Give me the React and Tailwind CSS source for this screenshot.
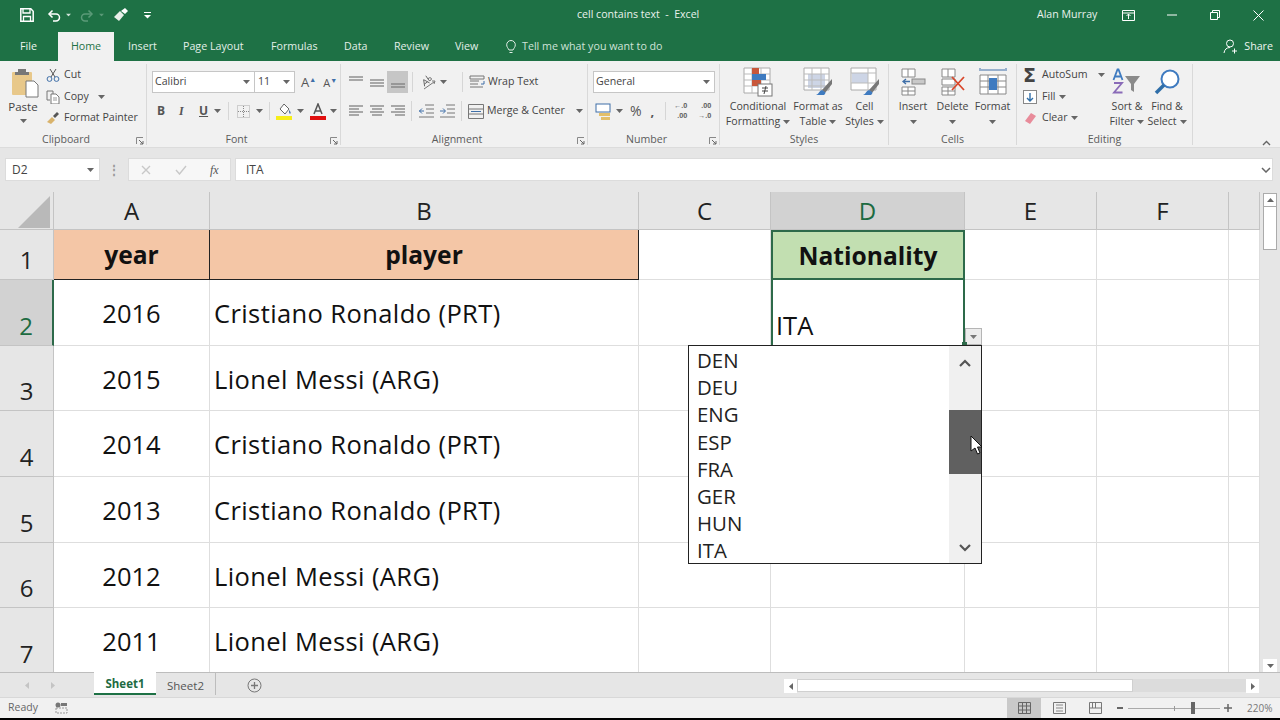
import React from "react";

const Caret = ({ c = "#666", className = "" }) => (
  <svg width="7" height="4" viewBox="0 0 7 4" className={`shrink-0 ${className}`}><path d="M0 0h7L3.5 4z" fill={c} /></svg>
);

const Launcher = () => (
  <svg width="8" height="8" viewBox="0 0 8 8" className="absolute right-[2px] top-[5px]"><path d="M.5 7V.5H7" fill="none" stroke="#888" /><path d="M3 3l4 4M7 4v3H4" fill="none" stroke="#666" /></svg>
);

const Group = ({ w, label, launcher, children }) => (
  <div className={`flex flex-col border-r border-[#d9d9d9] h-full shrink-0 ${w}`}>
    <div className="flex-1 min-h-0 relative">{children}</div>
    <div className={`relative h-[16px] mb-[-3px] flex items-center justify-center text-[10.6px] text-[#5c5c5c] ${launcher ? "pr-[14px]" : ""}`}>
      {label}
      {launcher && <Launcher />}
    </div>
  </div>
);

const Big = ({ w, icon, l1, l2, caret }) => (
  <div className={`flex flex-col items-center shrink-0 ${w}`}>
    <div className="h-[32px] flex items-center justify-center">{icon}</div>
    <div className="text-[10.6px] leading-[15px] text-[#444] mt-[1px] whitespace-nowrap">{l1}</div>
    <div className="text-[10.6px] leading-[15px] text-[#444] whitespace-nowrap flex items-center gap-[3px] h-[15px]">
      {l2}
      {caret && <Caret />}
    </div>
  </div>
);

const Lines = ({ ys, xs }) => (
  <svg width="14" height="14" viewBox="0 0 14 14" className="shrink-0">
    {ys.map((y, i) => <path key={i} d={`M${xs ? xs[i][0] : 0} ${y}H${xs ? xs[i][1] : 14}`} stroke="#777" strokeWidth="1.2" />)}
  </svg>
);

const GridIcon = ({ children }) => <svg width="30" height="30" viewBox="0 0 30 30">{children}</svg>;

function Ribbon() {
  return (
    <div className="h-[87px] bg-[#f1f1f1] pt-[3px] flex border-b border-[#dcdcdc] shrink-0">
      <div className="h-[81px] flex">
        <Group w="w-[147px]" label="Clipboard" launcher>
          <div className="flex">
            <div className="w-[46px] flex flex-col items-center">
              <svg width="28" height="30" viewBox="0 0 28 30" className="mt-[4px] ml-[4px]">
                <rect x="1" y="4" width="20" height="23" rx="1" fill="#e8c88a" />
                <rect x="7" y="1" width="8" height="5" fill="#777" />
                <rect x="4" y="4" width="14" height="3" fill="#777" />
                <path d="M15 13h8l4 4v12H15z" fill="#fff" stroke="#777" />
              </svg>
              <div className="text-[11.5px] leading-[15px] text-[#444] mt-[1px]">Paste</div>
              <Caret className="mt-[5px]" />
            </div>
            <div className="flex flex-col text-[10.6px] text-[#444]">
              <div className="h-[22px] flex items-center gap-[4px]">
                <svg width="14" height="14" viewBox="0 0 14 14"><path d="M4 1l5 8M10 1L5 9" stroke="#555" fill="none" /><circle cx="3.5" cy="11" r="2.4" fill="none" stroke="#3f6fa8" /><circle cx="10.5" cy="11" r="2.4" fill="none" stroke="#3f6fa8" /></svg>
                Cut
              </div>
              <div className="h-[21px] flex items-center gap-[4px]">
                <svg width="14" height="14" viewBox="0 0 14 14"><path d="M1 1h6v3M1 1v9h3" fill="none" stroke="#777" /><path d="M5 4h5l3 3v7H5z" fill="#fff" stroke="#777" /><path d="M7 8h4M7 10h4" stroke="#999" /></svg>
                Copy <Caret className="ml-[5px]" />
              </div>
              <div className="h-[22px] flex items-center gap-[4px]">
                <svg width="14" height="14" viewBox="0 0 14 14"><path d="M1 11l5-5 3 3-4 4z" fill="#d9b36c" /><path d="M7 5l4-4 2 2-4 4z" fill="#555" /></svg>
                Format Painter
              </div>
            </div>
          </div>
        </Group>

        <Group w="w-[194px]" label="Font" launcher>
          <div className="flex flex-col pl-[5px] pt-[7px]">
            <div className="flex items-center">
              <div className="w-[103px] h-[22px] bg-white border border-[#c6c6c6] flex items-center justify-between px-[2px] pr-[4px] text-[10.6px] text-[#444]">Calibri<Caret /></div>
              <div className="w-[40px] h-[22px] bg-white border border-l-0 border-[#c6c6c6] flex items-center justify-between px-[3px] pr-[4px] text-[10.6px] text-[#444]">11<Caret /></div>
              <div className="ml-[6px] text-[13px] text-[#555] leading-none">A<span className="text-[7px] align-top text-[#3f6fa8]">▲</span></div>
              <div className="ml-[7px] text-[11px] text-[#555] leading-none">A<span className="text-[7px] align-top text-[#3f6fa8]">▼</span></div>
            </div>
            <div className="flex items-center h-[22px] mt-[7px] pl-[5px] text-[#555]">
              <span className="w-[21px] text-[12px] font-bold">B</span>
              <span className="w-[21px] pl-[1px] text-[12px] italic font-bold [font-family:'Liberation_Serif',serif]">I</span>
              <span className="w-[15px] text-[12px] font-bold underline">U</span>
              <Caret />
              <div className="w-px h-[18px] bg-[#d6d6d6] ml-[7px] mr-[8px]" />
              <svg width="13" height="13" viewBox="0 0 13 13"><path d="M.5.5h12v12H.5z" fill="none" stroke="#aaa" strokeDasharray="1 1" /><path d="M6.5 1v11M1 6.5h11" stroke="#888" strokeDasharray="1 1" /></svg>
              <Caret className="ml-[6px]" />
              <div className="w-px h-[18px] bg-[#d6d6d6] ml-[6px] mr-[6px]" />
              <svg width="17" height="17" viewBox="0 0 17 17"><path d="M8 1l5 5-4 5-5-5z" fill="#fff" stroke="#666" /><path d="M13 7c2 2 2 3 1 4-1-1-1-2-1-4z" fill="#3f6fa8" /><rect x="0" y="13" width="16" height="4" fill="#f6ee1a" /></svg>
              <Caret className="ml-[4px]" />
              <svg width="16" height="17" viewBox="0 0 16 17" className="ml-[6px]"><path d="M4 11L8 1l4 10M5.5 8h5" fill="none" stroke="#555" strokeWidth="1.5" /><rect x="0" y="13" width="16" height="4" fill="#e00f0f" /></svg>
              <Caret className="ml-[4px]" />
            </div>
          </div>
        </Group>

        <Group w="w-[247px]" label="Alignment" launcher>
          <div className="flex flex-col pl-[8px] pt-[7px]">
            <div className="flex items-center h-[22px]">
              <div className="w-[21px]"><Lines ys={[2, 5]} /></div>
              <div className="w-[17px]"><Lines ys={[5, 8, 11]} /></div>
              <div className="w-[21px] h-[22px] bg-[#c6c6c6] flex items-center justify-center"><Lines ys={[9, 12]} /></div>
              <div className="w-px h-[20px] bg-[#d6d6d6] ml-[4px] mr-[7px]" />
              <svg width="17" height="15" viewBox="0 0 17 15"><path d="M2 9l3-6 3 6M3 7h4M9 1v6M9 5c1-1 3 0 3 1.2S10 8 9 7" fill="none" stroke="#666" strokeWidth=".9" transform="rotate(-35 7 6)" /><path d="M4 14l10-7M12 6h3l-1 3" fill="none" stroke="#777" /></svg>
              <Caret className="ml-[3px]" />
              <div className="w-px h-[20px] bg-[#d6d6d6] ml-[15px] mr-[6px]" />
              <svg width="16" height="15" viewBox="0 0 16 15"><path d="M1 1h14v3H1zM1 6h9M1 9h8M1 12h13" fill="none" stroke="#777" /><path d="M15 6v3h-3" fill="none" stroke="#3f6fa8" /></svg>
              <span className="ml-[3px] text-[10.6px] text-[#444]">Wrap Text</span>
            </div>
            <div className="flex items-center h-[22px] mt-[7px]">
              <div className="w-[21px]"><Lines ys={[2, 5, 8, 11]} xs={[[0, 14], [0, 10], [0, 14], [0, 10]]} /></div>
              <div className="w-[21px]"><Lines ys={[2, 5, 8, 11]} xs={[[0, 14], [2, 12], [0, 14], [2, 12]]} /></div>
              <div className="w-[17px]"><Lines ys={[2, 5, 8, 11]} xs={[[0, 14], [4, 14], [0, 14], [4, 14]]} /></div>
              <div className="w-px h-[20px] bg-[#d6d6d6] ml-[3px] mr-[7px]" />
              <svg width="16" height="14" viewBox="0 0 16 14" className="mr-[5px]"><path d="M6 1h9M7 5h8M7 9h8M0 13h15" stroke="#777" fill="none" /><path d="M5 7H0M3 4.5L.5 7 3 9.5" stroke="#3f6fa8" fill="none" /></svg>
              <svg width="16" height="14" viewBox="0 0 16 14"><path d="M6 1h9M7 5h8M7 9h8M0 13h15" stroke="#777" fill="none" /><path d="M0 7h5M3 4.5L5.5 7 3 9.5" stroke="#3f6fa8" fill="none" /></svg>
              <div className="w-px h-[20px] bg-[#d6d6d6] ml-[5px] mr-[6px]" />
              <svg width="16" height="15" viewBox="0 0 16 15"><path d="M.5.5h15v14H.5zM1 5h14M1 10h14" fill="none" stroke="#777" /><path d="M3 7.5h10" stroke="#3f6fa8" /></svg>
              <span className="ml-[3px] text-[10.6px] text-[#444] whitespace-nowrap">Merge &amp; Center</span>
              <Caret className="ml-[11px]" />
            </div>
          </div>
        </Group>

        <Group w="w-[132px]" label="Number" launcher>
          <div className="flex flex-col pl-[5px] pt-[7px]">
            <div className="w-[122px] h-[22px] bg-white border border-[#c6c6c6] flex items-center justify-between px-[2px] pr-[4px] text-[10.6px] text-[#444]">General<Caret /></div>
            <div className="flex items-center h-[22px] mt-[7px] pl-[2px]">
              <svg width="17" height="17" viewBox="0 0 17 17"><rect x="1" y="1" width="14" height="8" fill="#fff" stroke="#3f6fa8" /><rect x="4" y="10" width="11" height="3" fill="#e3bf6a" /><rect x="6" y="14" width="9" height="3" fill="#e3bf6a" /></svg>
              <Caret className="ml-[4px]" />
              <span className="ml-[7px] text-[14px] text-[#555] leading-none">%</span>
              <span className="ml-[9px] text-[13px] font-bold text-[#555] leading-none">,</span>
              <div className="w-px h-[18px] bg-[#d6d6d6] ml-[11px] mr-[6px]" />
              <div className="w-[15px] flex flex-col items-end text-[7px] font-bold leading-[10px] text-[#666] whitespace-nowrap">
                <span>←.0</span>
                <span>.00</span>
              </div>
              <div className="w-[15px] ml-[9px] flex flex-col items-end text-[7px] font-bold leading-[10px] text-[#666] whitespace-nowrap">
                <span>.00</span>
                <span>→.0</span>
              </div>
            </div>
          </div>
        </Group>

        <Group w="w-[169px]" label="Styles">
          <div className="flex pt-[2px]">
            <Big w="w-[76px]" l1="Conditional" l2="Formatting" caret icon={
              <GridIcon>
                <path d="M1 1h26v25H1z" fill="#fff" stroke="#aaa" /><path d="M1 7h26M1 13h26M1 19h26M9 1v25M18 1v25" stroke="#bbb" />
                <rect x="9" y="1" width="7" height="6" fill="#c8573a" /><rect x="9" y="7" width="14" height="6" fill="#3f7bc0" /><rect x="9" y="13" width="9" height="6" fill="#c8573a" />
                <rect x="15" y="17" width="14" height="12" fill="#fff" stroke="#777" /><path d="M19 21h6M19 24h6M23 19l-2 8" stroke="#444" fill="none" />
              </GridIcon>} />
            <Big w="w-[44px]" l1="Format as" l2="Table" caret icon={
              <GridIcon>
                <path d="M1 1h25v22H1z" fill="#fff" stroke="#aaa" /><rect x="5" y="7" width="17" height="14" fill="#cdd5e6" /><path d="M1 7h25M1 13h25M1 19h25M9 1v22M18 1v22" stroke="#bbb" />
                <path d="M29 12L19 23l3 3 7-9z" fill="#777" /><path d="M19 23c-3 1-3 4-6 5h8c1-1 2-2 1-3z" fill="#3f7bc0" />
              </GridIcon>} />
            <Big w="w-[49px]" l1="Cell" l2="Styles" caret icon={
              <GridIcon>
                <path d="M1 1h25v22H1z" fill="#fff" stroke="#aaa" /><rect x="2" y="6" width="16" height="10" fill="#cdd5e6" /><path d="M1 6h25M1 16h25M18 1v22" stroke="#bbb" />
                <path d="M29 12L19 23l3 3 7-9z" fill="#777" /><path d="M19 23c-3 1-3 4-6 5h8c1-1 2-2 1-3z" fill="#3f7bc0" />
              </GridIcon>} />
          </div>
        </Group>

        <Group w="w-[128px]" label="Cells">
          <div className="flex pl-[4px] pt-[2px]">
            <Big w="w-[40px]" l1="Insert" l2="" caret icon={
              <GridIcon>
                <path d="M4 2h13v8H4zM10 2v8M4 20h13v8H4zM10 20v8M4 24h13" fill="#fff" stroke="#888" /><rect x="14" y="12" width="13" height="5" fill="#c9c9c9" stroke="#888" /><path d="M12 14.5H5M8 12l-3 2.5L8 17" stroke="#3f6fa8" fill="none" strokeWidth="1.3" />
              </GridIcon>} />
            <Big w="w-[39px]" l1="Delete" l2="" caret icon={
              <GridIcon>
                <path d="M4 2h13v8H4zM10 2v8M4 20h13v8H4zM10 20v8M4 24h13M4 12h13v6H4z" fill="#fff" stroke="#888" /><path d="M14 10l12 13M26 10L14 23" stroke="#d9472b" strokeWidth="1.8" />
              </GridIcon>} />
            <Big w="w-[41px]" l1="Format" l2="" caret icon={
              <GridIcon>
                <path d="M2 4V1M28 4V1M3 3h24" stroke="#3f6fa8" fill="none" /><path d="M2 8h26v19H2zM2 14h26M2 20h26M10 8v19M20 8v19" fill="#fff" stroke="#888" /><rect x="11" y="11" width="8" height="12" fill="#3f7bc0" />
              </GridIcon>} />
          </div>
        </Group>

        <Group w="w-[176px]" label="Editing">
          <div className="flex pl-[6px] text-[10.6px] text-[#444]">
            <div className="w-[84px] flex flex-col">
              <div className="h-[22px] flex items-center">
                <span className="w-[18px] text-[19px] leading-none text-[#444] font-bold [font-family:'DejaVu_Sans',sans-serif]">Σ</span>
                <span className="ml-[1px]">AutoSum</span>
                <Caret className="ml-[11px]" />
              </div>
              <div className="h-[21px] flex items-center">
                <svg width="14" height="14" viewBox="0 0 14 14" className="mr-[5px]"><rect x=".5" y=".5" width="13" height="13" fill="#fff" stroke="#888" /><path d="M7 3v8M4 8l3 3 3-3" fill="none" stroke="#2f6ea8" strokeWidth="1.4" /></svg>
                Fill <Caret className="ml-[3px]" />
              </div>
              <div className="h-[22px] flex items-center">
                <svg width="14" height="13" viewBox="0 0 14 13" className="mr-[5px]"><path d="M8 1l5 3-6 8-5-3z" fill="#e88b9a" /></svg>
                Clear <Caret className="ml-[3px]" />
              </div>
            </div>
            <div className="flex pt-[2px]">
              <Big w="w-[40px]" l1="Sort &amp;" l2="Filter" caret icon={
                <svg width="30" height="28" viewBox="0 0 30 28">
                  <path d="M1.5 12L5.5 1.5h1L10.5 12M3 8.5h6" fill="none" stroke="#3f7bc0" strokeWidth="1.8" />
                  <path d="M2 15h8l-8 9.5h8.5" fill="none" stroke="#8a6bb8" strokeWidth="1.8" />
                  <path d="M13 8h15l-6 8v8l-3-2v-6z" fill="#8a8a8a" />
                </svg>} />
              <Big w="w-[40px]" l1="Find &amp;" l2="Select" caret icon={
                <svg width="28" height="28" viewBox="0 0 28 28"><circle cx="17" cy="11" r="8.5" fill="#fff" stroke="#3f7bc0" strokeWidth="2" /><path d="M11 17l-8 8" stroke="#2f6ea8" strokeWidth="3.5" /></svg>} />
            </div>
          </div>
        </Group>
      </div>
      <div className="flex-1 flex items-end justify-end pr-[9px] pb-[1px]">
        <svg width="9" height="6" viewBox="0 0 9 6"><path d="M1 5l3.5-3.5L8 5" stroke="#666" strokeWidth="1.4" fill="none" /></svg>
      </div>
    </div>
  );
}

const hdr = "bg-[#e6e6e6] border-r border-b border-[#c4c4c4] flex items-center justify-center text-[24px] text-[#222]";
const rowHdr = "bg-[#e6e6e6] border-r border-b border-[#c4c4c4] flex items-end justify-center text-[24px] text-[#222] leading-[38px]";
const cell = "bg-white border-r border-b border-[#dedede]";

const data = [
  ["2016", "Cristiano Ronaldo (PRT)"],
  ["2015", "Lionel Messi (ARG)"],
  ["2014", "Cristiano Ronaldo (PRT)"],
  ["2013", "Cristiano Ronaldo (PRT)"],
  ["2012", "Lionel Messi (ARG)"],
  ["2011", "Lionel Messi (ARG)"],
];
const items = ["DEN", "DEU", "ENG", "ESP", "FRA", "GER", "HUN", "ITA"];

function Sheet() {
  return (
    <div className="relative flex h-[480px] shrink-0">
      <div className="w-[1260px] h-[480px] overflow-hidden grid grid-cols-[54px_156px_429px_132px_194px_132px_132px_31px] grid-rows-[38px_50px_66px_65px_66px_66px_65px_66px] text-[#111] text-[25.5px]">
        <div className={`${hdr} relative`}>
          <svg width="34" height="34" viewBox="0 0 34 34" className="absolute left-[17px] top-[3px]"><path d="M33 1v32H1z" fill="#b9b9b9" /></svg>
        </div>
        <div className={hdr}>A</div>
        <div className={hdr}>B</div>
        <div className={hdr}>C</div>
        <div className={`${hdr} !bg-[#d2d2d2] !text-[#1d6b41]`}>D</div>
        <div className={hdr}>E</div>
        <div className={hdr}>F</div>
        <div className={hdr} />

        <div className={rowHdr}>1</div>
        <div className="bg-[#f4c6a6] border-r border-b border-[#222] flex items-center justify-center font-bold text-[24.6px] pt-[2px]">year</div>
        <div className="bg-[#f4c6a6] border-r border-b border-[#222] flex items-center justify-center font-bold text-[24.6px] pt-[2px]">player</div>
        <div className={cell} />
        <div className="bg-[#c2dfb1] border-2 border-[#2d6a4a] flex items-center justify-center font-bold text-[24.6px] pt-[2px]">Nationality</div>
        <div className={cell} />
        <div className={cell} />
        <div className={cell} />

        {data.map((r, i) => (
          <React.Fragment key={i}>
            <div className={`${rowHdr} ${i === 0 ? "!bg-[#d2d2d2] !text-[#1d6b41] border-r-2 !border-r-[#2d6a4a]" : ""}`}>{i + 2}</div>
            <div className={`${cell} flex items-center justify-center pt-[2px]`}>{r[0]}</div>
            <div className={`${cell} flex items-center pl-[4px] pt-[2px] whitespace-nowrap tracking-[0.4px]`}>{r[1]}</div>
            <div className={cell} />
            {i === 0 ? (
              <div className="bg-white border-x-2 border-[#2d6a4a] flex items-end pl-[3px] leading-[42px]">ITA</div>
            ) : (
              <div className={cell} />
            )}
            <div className={cell} />
            <div className={cell} />
            <div className={cell} />
          </React.Fragment>
        ))}
      </div>

      <div className="w-[20px] bg-[#e6e6e6] flex flex-col items-center pt-[1px]">
        <div className="w-[14px] h-[14px] bg-white border border-[#ababab] flex items-center justify-center"><svg width="7" height="4" viewBox="0 0 7 4"><path d="M0 4h7L3.5 0z" fill="#666" /></svg></div>
        <div className="w-[14px] h-[43px] bg-white border border-t-0 border-[#ababab]" />
        <div className="flex-1" />
        <div className="w-[14px] h-[13px] bg-white flex items-center justify-center"><svg width="7" height="4" viewBox="0 0 7 4"><path d="M0 0h7L3.5 4z" fill="#666" /></svg></div>
      </div>

      {/* data validation arrow */}
      <div className="absolute left-[965px] top-[136px] w-[17px] h-[17px] bg-[#ececec] border border-[#b5b5b5] flex items-center justify-center">
        <Caret c="#777" />
      </div>
      <div className="absolute left-[962px] top-[150px] w-[5px] h-[4px] bg-[#2d6a4a]" />

      {/* dropdown list */}
      <div className="absolute left-[688px] top-[153px] w-[294px] h-[219px] bg-white border border-[#222] flex text-[20.4px] text-[#222]">
        <div className="flex-1 pl-[8px] pt-[1px] flex flex-col overflow-hidden">
          {items.map((t) => (
            <div key={t} className="h-[27.2px] leading-[27.2px] shrink-0">{t}</div>
          ))}
        </div>
        <div className="w-[32px] bg-[#f0f0f0] flex flex-col items-center">
          <div className="h-[64px] w-full flex justify-center pt-[13px]">
            <svg width="12" height="8" viewBox="0 0 12 8"><path d="M1 7l5-5 5 5" fill="none" stroke="#555" strokeWidth="2.2" /></svg>
          </div>
          <div className="h-[64px] w-full bg-[#606060]" />
          <div className="flex-1" />
          <div className="h-[28px] flex justify-center pt-[9px]">
            <svg width="12" height="8" viewBox="0 0 12 8"><path d="M1 1l5 5 5-5" fill="none" stroke="#555" strokeWidth="2.2" /></svg>
          </div>
        </div>
      </div>

      {/* mouse cursor */}
      <svg width="13" height="20" viewBox="0 0 13 20" className="absolute left-[970px] top-[243px]">
        <path d="M1 1v15l4-3 2.5 6 2.5-1-2.5-6H12z" fill="#fff" stroke="#111" strokeWidth="1" />
      </svg>
    </div>
  );
}

export default function App() {
  return (
    <div className="w-[1280px] h-[720px] overflow-hidden flex flex-col bg-[#e6e6e6] [font-family:'Open_Sans',sans-serif]">
      {/* title bar */}
      <div className="h-[30px] bg-[#1e7145] flex items-center text-white text-[10.6px] shrink-0">
        <svg width="14" height="14" viewBox="0 0 14 14" className="ml-[20px]"><path d="M.8.8h10l2.4 2.4v10H.8z" fill="none" stroke="#fff" strokeWidth="1.5" /><path d="M3 1v4h7V1M3.5 13V8.5h7V13" fill="none" stroke="#fff" strokeWidth="1.3" /></svg>
        <svg width="14" height="13" viewBox="0 0 14 13" className="ml-[13px]"><path d="M3 5h6a3.5 3.5 0 010 7H6" fill="none" stroke="#fff" strokeWidth="1.5" /><path d="M5.5 1.5L2 5l3.5 3.5" fill="none" stroke="#fff" strokeWidth="1.5" /></svg>
        <Caret c="#cfe3d8" className="ml-[4px] scale-75" />
        <svg width="14" height="13" viewBox="0 0 14 13" className="ml-[8px]"><path d="M11 5H5a3.5 3.5 0 000 7h3" fill="none" stroke="#5b9a78" strokeWidth="1.5" /><path d="M8.5 1.5L12 5 8.5 8.5" fill="none" stroke="#5b9a78" strokeWidth="1.5" /></svg>
        <Caret c="#5b9a78" className="ml-[4px] scale-75" />
        <svg width="16" height="14" viewBox="0 0 16 14" className="ml-[8px]"><path d="M1 9l6-6 4 4-5 6z" fill="#e8efe9" /><path d="M8 3l4-3 3 3-3 3z" fill="#fff" /></svg>
        <svg width="7" height="7" viewBox="0 0 7 7" className="ml-[15px]"><path d="M0 .5h7" stroke="#fff" /><path d="M0 3h7L3.5 6.5z" fill="#fff" /></svg>
        <span className="ml-[426px] w-[132px] whitespace-pre text-[#e9f2ec]">cell contains text  -  Excel</span>
        <span className="ml-[328px] w-[61px] whitespace-nowrap text-[#e9f2ec]">Alan Murray</span>
        <svg width="13" height="11" viewBox="0 0 13 11" className="ml-[24px]"><path d="M.5.5h12v10H.5zM1 3h11" fill="none" stroke="#fff" /><path d="M6.5 9V4M4.5 6l2-2 2 2" fill="none" stroke="#fff" /></svg>
        <svg width="10" height="2" viewBox="0 0 10 2" className="ml-[32px]"><path d="M0 1h10" stroke="#fff" /></svg>
        <svg width="10" height="10" viewBox="0 0 10 10" className="ml-[33px]"><path d="M.5 2.5h7v7h-7zM2.5 2.5v-2h7v7h-2" fill="none" stroke="#fff" /></svg>
        <svg width="11" height="11" viewBox="0 0 11 11" className="ml-[33px]"><path d="M.5.5l10 10M10.5.5l-10 10" stroke="#fff" /></svg>
      </div>

      {/* tabs */}
      <div className="h-[31px] bg-[#1e7145] flex items-end text-white text-[10.7px] shrink-0">
        <div className="h-[29px] pl-[20px] w-[58px] flex items-center text-[#eef5f0]">File</div>
        <div className="h-[29px] w-[56px] bg-[#f1f1f1] text-[#1e7145] flex items-center justify-center">Home</div>
        <div className="h-[29px] ml-[14px] w-[55px] flex items-center text-[#e3efe8]">Insert</div>
        <div className="h-[29px] w-[88px] flex items-center text-[#e3efe8]">Page Layout</div>
        <div className="h-[29px] w-[73px] flex items-center text-[#e3efe8]">Formulas</div>
        <div className="h-[29px] w-[50px] flex items-center text-[#e3efe8]">Data</div>
        <div className="h-[29px] w-[61px] flex items-center text-[#e3efe8]">Review</div>
        <div className="h-[29px] w-[51px] flex items-center text-[#e3efe8]">View</div>
        <div className="h-[29px] flex items-center gap-[6px] text-[#cfe3d8]">
          <svg width="10" height="14" viewBox="0 0 10 14"><path d="M3 10C2 8 .7 7 .7 4.8a4.3 4.3 0 018.6 0C9.3 7 8 8 7 10zM3.5 12.5h3" fill="none" stroke="#e3efe8" /></svg>
          Tell me what you want to do
        </div>
        <div className="flex-1" />
        <div className="h-[29px] flex items-center gap-[6px] pr-[7px] text-[#eef5f0]">
          <svg width="15" height="15" viewBox="0 0 15 15"><circle cx="7" cy="4.5" r="3.5" fill="none" stroke="#fff" /><path d="M1 14c.5-3.5 2.5-5.5 6-5.5M9 12h5M11.5 9.5v5" fill="none" stroke="#fff" /></svg>
          Share
        </div>
      </div>

      <Ribbon />

      {/* formula bar */}
      <div className="h-[44px] shrink-0 flex items-start pt-[10px] pl-[5px] text-[12px] text-[#444]">
        <div className="w-[95px] h-[23px] bg-white border border-[#dcdcdc] flex items-center justify-between pl-[6px] pr-[5px]">D2<Caret /></div>
        <div className="w-[28px] h-[23px] flex justify-center items-center text-[#999] text-[12px] font-bold tracking-tighter">⋮</div>
        <div className="w-[103px] h-[23px] bg-[#f7f7f7] border border-[#dcdcdc] flex items-center">
          <svg width="10" height="10" viewBox="0 0 10 10" className="ml-[12px]"><path d="M1 1l8 8M9 1L1 9" stroke="#c8c8c8" strokeWidth="1.4" /></svg>
          <svg width="12" height="10" viewBox="0 0 12 10" className="ml-[24px]"><path d="M1 5l3.5 4L11 1" stroke="#c8c8c8" strokeWidth="1.4" fill="none" /></svg>
          <span className="ml-[23px] italic text-[12px] text-[#555] [font-family:'Liberation_Serif',serif]">fx</span>
        </div>
        <div className="w-[1038px] ml-[4px] h-[23px] bg-white border border-[#dcdcdc] flex items-center justify-between pl-[10px] pr-[1px]">
          ITA
          <svg width="10" height="6" viewBox="0 0 10 6"><path d="M1 1l4 4 4-4" stroke="#666" strokeWidth="1.5" fill="none" /></svg>
        </div>
      </div>

      <Sheet />

      {/* sheet tabs */}
      <div className="h-[25px] shrink-0 bg-[#e6e6e6] flex items-start border-t border-[#bdbdbd] text-[11.5px]">
        <div className="w-[94px] h-[22px] flex items-center gap-[22px] pl-[25px] pt-[2px]">
          <svg width="4" height="7" viewBox="0 0 4 7"><path d="M4 0v7L0 3.5z" fill="#c4c4c4" /></svg>
          <svg width="4" height="7" viewBox="0 0 4 7"><path d="M0 0v7l4-3.5z" fill="#c4c4c4" /></svg>
        </div>
        <div className="w-[62px] h-[23px] mt-[-1px] pt-[3px] bg-white border-b-2 border-[#1e7145] flex items-center justify-center font-bold text-[#1e6b42]">Sheet1</div>
        <div className="w-[60px] h-[22px] pt-[3px] border-r border-[#bdbdbd] flex items-center justify-center text-[#555]">Sheet2</div>
        <div className="w-[46px] h-[22px] pt-[2px] flex items-center justify-end">
          <svg width="15" height="15" viewBox="0 0 15 15"><circle cx="7.5" cy="7.5" r="6.5" fill="none" stroke="#777" /><path d="M7.5 4v7M4 7.5h7" stroke="#777" strokeWidth="1.3" /></svg>
        </div>
        <div className="w-[522px] h-full" />
        <div className="w-[13px] h-[14px] mt-[6px] bg-white flex items-center justify-center">
          <svg width="4" height="7" viewBox="0 0 4 7"><path d="M4 0v7L0 3.5z" fill="#666" /></svg>
        </div>
        <div className="w-[336px] h-[13px] mt-[6px] bg-white border border-[#d0d0d0]" />
        <div className="w-[113px] h-[13px] mt-[6px] bg-[#dcdcdc]" />
        <div className="w-[13px] h-[14px] mt-[6px] bg-white flex items-center justify-center">
          <svg width="4" height="7" viewBox="0 0 4 7"><path d="M0 0v7l4-3.5z" fill="#666" /></svg>
        </div>
      </div>

      {/* status bar */}
      <div className="h-[21px] shrink-0 bg-[#f1f1f1] flex items-center text-[10.5px] text-[#666] border-t border-[#d8d8d8]">
        <span className="ml-[8px]">Ready</span>
        <svg width="13" height="12" viewBox="0 0 13 12" className="ml-[17px]"><circle cx="3" cy="3" r="2.5" fill="#777" /><path d="M6 1h6v3H6z" fill="#777" /><path d="M1 6h11v5H1z" fill="none" stroke="#999" strokeDasharray="2 1" /></svg>
        <div className="flex-1" />
        <div className="w-[34px] h-[20px] bg-[#c9c9c9] flex items-center justify-center">
          <svg width="13" height="12" viewBox="0 0 13 12"><path d="M.5.5h12v11H.5zM.5 4h12M.5 8h12M4.5.5v11M8.5.5v11" fill="none" stroke="#666" /></svg>
        </div>
        <svg width="13" height="12" viewBox="0 0 13 12" className="ml-[12px]"><path d="M.5.5h12v11H.5z" fill="none" stroke="#777" /><path d="M3 3h7M3 6h7M3 9h7" stroke="#888" /></svg>
        <svg width="13" height="12" viewBox="0 0 13 12" className="ml-[23px]"><path d="M.5.5h12v11H.5zM.5 6h12M6.5.5V6M3.5.5V6" fill="none" stroke="#777" /></svg>
        <span className="ml-[15px] w-[6px] h-[2px] bg-[#666]" />
        <div className="ml-[5px] w-[92px] h-[12px] relative flex items-center">
          <div className="w-full h-px bg-[#aaa]" />
          <div className="absolute left-[46px] top-[4px] w-px h-[5px] bg-[#999]" />
          <div className="absolute left-[63px] top-0 w-[4px] h-[12px] bg-[#666]" />
        </div>
        <svg width="8" height="8" viewBox="0 0 8 8" className="ml-[4px]"><path d="M4 0v8M0 4h8" stroke="#666" strokeWidth="1.5" /></svg>
        <span className="ml-[15px] w-[25px] mr-[8px] text-[10px] text-[#777]">220%</span>
      </div>
      <div className="h-[3px] bg-black shrink-0" />
    </div>
  );
}
